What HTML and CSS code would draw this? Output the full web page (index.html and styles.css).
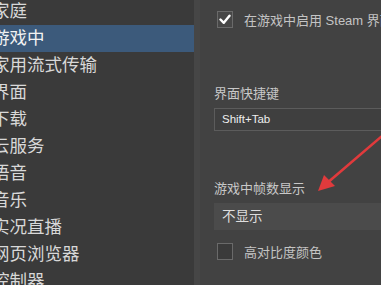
FILE: index.html
```html
<!DOCTYPE html>
<html lang="zh-CN">
<head>
    <meta charset="UTF-8">
    <title>设置 - 游戏中</title>
    <link rel="stylesheet" href="styles.css">
</head>
<body>
    <div class="window">
        <!-- Sidebar Section -->
        <div class="sidebar">
            <ul>
                <li>家庭</li>
                <li class="active">游戏中</li>
                <li>家用流式传输</li>
                <li>界面</li>
                <li>下载</li>
                <li>云服务</li>
                <li>语音</li>
                <li>音乐</li>
                <li>实况直播</li>
                <li>网页浏览器</li>
                <li>控制器</li>
            </ul>
        </div>
        <div class="scroll-strip"></div>

        <!-- Content Section -->
        <div class="panel">
            <div class="check-row first">
                <span class="checkbox checked">
                    <svg width="12" height="11" viewBox="0 0 12 11"><path d="M1.5 5.5 L4.8 8.8 L10.5 1.8" fill="none" stroke="#ffffff" stroke-width="2.4" stroke-linecap="round" stroke-linejoin="round"/></svg>
                </span>
                <span class="check-text">在游戏中启用 Steam 界面</span>
            </div>

            <div class="field-label hotkey-label">界面快捷键</div>
            <div class="text-input">Shift+Tab</div>

            <div class="field-label fps-label">游戏中帧数显示</div>
            <div class="dropdown">不显示</div>

            <div class="check-row last">
                <span class="checkbox"></span>
                <span class="check-text">高对比度颜色</span>
            </div>

            <!-- red annotation arrow -->
            <svg class="arrow" width="80" height="70" viewBox="0 0 80 70">
                <line x1="78" y1="2" x2="22" y2="50" stroke="#e03a3c" stroke-width="2.6" stroke-linecap="round"/>
                <polygon points="14,57 20,41 31,52" fill="#e03a3c"/>
            </svg>
        </div>
    </div>
</body>
</html>
```

FILE: styles.css
```css
body {
    margin: 0;
    padding: 0;
    background-color: #424242;
    font-family: "Liberation Sans", "Noto Sans CJK SC", sans-serif;
    overflow: hidden;
}

.window {
    display: flex;
    width: 381px;
    height: 285px;
    overflow: hidden;
}

/* Sidebar styling */
.sidebar {
    width: 194px;
    flex-shrink: 0;
    background: #3a3a3a;
    overflow: hidden;
}

.sidebar ul {
    list-style-type: none;
    padding: 0;
    margin: -2px 0 0 0;
}

.sidebar ul li {
    height: 27px;
    line-height: 27px;
    text-indent: -8px;
    font-size: 17.5px;
    color: #d8d8d8;
    white-space: nowrap;
}

.sidebar ul li.active {
    background-color: #3c5a7b;
    color: #f2f2f2;
}

.scroll-strip {
    width: 6px;
    flex-shrink: 0;
    background: #464646;
}

/* Content Section */
.panel {
    position: relative;
    flex: 1;
    padding-left: 14px;
    background: #424242;
    overflow: hidden;
}

.check-row {
    display: flex;
    align-items: center;
    height: 20px;
    padding-left: 3px;
    gap: 11px;
}

.check-row.first {
    margin-top: 9px;
}

.check-row.last {
    margin-top: 11px;
}

.checkbox {
    width: 14px;
    height: 15px;
    border: 1px solid #6a6a6a;
    background: #3a3a3a;
    display: flex;
    align-items: center;
    justify-content: center;
    flex-shrink: 0;
}

.checkbox.checked {
    background: #474747;
}

.check-text {
    font-size: 13px;
    color: #c4c4c4;
    white-space: nowrap;
}

.field-label {
    font-size: 13px;
    color: #c8c8c8;
    white-space: nowrap;
}

.hotkey-label {
    margin-top: 56px;
    height: 18px;
    line-height: 18px;
}

.text-input {
    margin-top: 5px;
    height: 21px;
    line-height: 21px;
    border: 1px solid #5c5c5c;
    border-right: none;
    background: #3f3f3f;
    padding-left: 7px;
    font-size: 11.5px;
    color: #eeeeee;
    white-space: nowrap;
}

.fps-label {
    margin-top: 49px;
    height: 18px;
    line-height: 18px;
}

.dropdown {
    margin-top: 5px;
    height: 27px;
    line-height: 27px;
    background: #4b4b4b;
    padding-left: 8px;
    font-size: 13.5px;
    color: #dedede;
    white-space: nowrap;
}

.arrow {
    position: absolute;
    left: 104px;
    top: 134px;
}
```
